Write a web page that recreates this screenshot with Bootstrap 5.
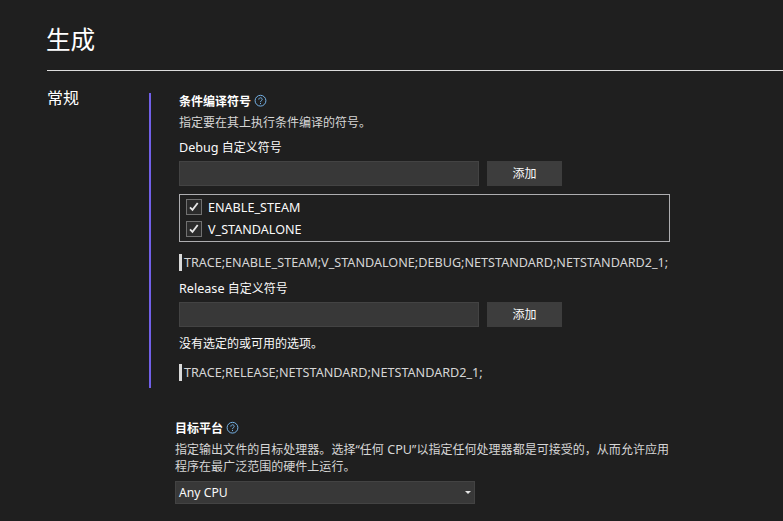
<!DOCTYPE html>
<html lang="zh-CN" data-bs-theme="dark">
<head>
<meta charset="utf-8">
<meta name="viewport" content="width=device-width, initial-scale=1">
<title>生成</title>
<link href="https://cdn.jsdelivr.net/npm/bootstrap@5.3.0/dist/css/bootstrap.min.css" rel="stylesheet">
<style>
body{background:#1f1f1f;color:#fafafa;font:12px/16px "Noto Sans","Noto Sans CJK SC",sans-serif;height:521px;overflow:hidden}
.page{padding:20px 0 0 47px}
.page-title{font-size:24.6px;line-height:40px;font-weight:400;height:51px;border-bottom:1px solid #dcdcdc;text-indent:-1px}
.section-name{font-size:16px;line-height:24px;width:102px;padding-top:15px;font-weight:400}
.options{width:521px;margin-top:22px}
.symbols{height:295px;border-left:2px solid #7160e8;padding-left:28px}
.platform{padding-left:26px;margin-top:33px}
.line{height:16px;line-height:16px;white-space:nowrap}
.heading{font-weight:700;font-size:12px}
.latin{font-size:12.6px}
.dim{color:#d6d6d6}
.symbols-title{line-height:16px;padding-top:1px}
.symbols-note{margin-top:6px}
.debug-label{margin-top:9px}
.entry{margin-top:5px}
.field{width:300px;height:25px;background:#383838;border:1px solid #434343;border-radius:0;padding:0 4px}
.field:focus{background:#383838;box-shadow:none}
.add{width:75px;height:25px;background:#3d3d3d;border:0;border-radius:0;color:#fafafa;font-size:12px;line-height:24px;padding:1px 0 0}
.add:hover{background:#4a4a4a}
.symbol-list{width:491px;height:48px;border:1px solid #adadb0;padding:4px 6px;gap:6px}
.symbol-list label{height:16px;line-height:18px;gap:6px}
.tick{width:16px;height:16px;border:1px solid #717171;background:#2b2b2b}
.tick svg,.help{display:block}
.help{margin-left:3px}
.summary{height:17px;line-height:17px;border-left:3px solid #dadada;padding-left:2px;color:#d6d6d6;white-space:nowrap;font-size:12.63px}
.debug-summary{margin-top:12px}
.release-label{margin-top:10px}
.release-entry{margin-top:5px}
.no-options{margin-top:9px}
.release-summary{margin-top:12px}
.platform-note{line-height:17px;margin-top:4px;letter-spacing:.03px;white-space:nowrap}
.platform-select{width:300px;height:23px;background:#383838;border:1px solid #434343;padding:0 3px;margin-top:6px;font-size:12.2px}
.arrow{border:3px solid transparent;border-top-color:#e4e4e4;border-bottom:0}
</style>
</head>
<body>
<main class="page">
<h1 class="page-title mb-0">生成</h1>
<div class="d-flex">
<h2 class="section-name mb-0">常规</h2>
<div class="options">
<section class="symbols">
<div class="line d-flex"><h3 class="heading symbols-title mb-0">条件编译符号</h3>
<svg class="help" width="13" height="16" viewBox="0 0 13 16" fill="none" stroke="#75b2e6"><circle cx="6.5" cy="7.7" r="5.4"/><path d="M4.8 6.6C4.8 4.2 8.2 4.2 8.2 6.5 8.2 7.6 6.5 7.7 6.5 9M6.5 9.9v1.2"/></svg></div>
<div class="line dim symbols-note">指定要在其上执行条件编译的符号。</div>
<label class="line d-block debug-label" for="debug"><span class="latin">Debug </span>自定义符号</label>
<div class="d-flex gap-2 entry"><input id="debug" class="form-control field"><button type="button" class="btn add">添加</button></div>
<div class="symbol-list mt-2 d-flex flex-column">
<label class="d-flex"><span class="tick"><svg width="14" height="14" viewBox="0 0 14 14"><path d="M3 7.3l2.5 2.6L10.7 3" fill="none" stroke="#e6e6e6" stroke-width="1.8"/></svg></span><span class="latin">ENABLE_STEAM</span></label>
<label class="d-flex"><span class="tick"><svg width="14" height="14" viewBox="0 0 14 14"><path d="M3 7.3l2.5 2.6L10.7 3" fill="none" stroke="#e6e6e6" stroke-width="1.8"/></svg></span><span class="latin">V_STANDALONE</span></label>
</div>
<div class="summary debug-summary">TRACE;ENABLE_STEAM;V_STANDALONE;DEBUG;NETSTANDARD;NETSTANDARD2_1;</div>
<label class="line d-block release-label" for="release"><span class="latin">Release </span>自定义符号</label>
<div class="d-flex gap-2 release-entry"><input id="release" class="form-control field"><button type="button" class="btn add">添加</button></div>
<div class="line no-options">没有选定的或可用的选项。</div>
<div class="summary release-summary">TRACE;RELEASE;NETSTANDARD;NETSTANDARD2_1;</div>
</section>
<section class="platform">
<div class="line d-flex"><h3 class="heading line mb-0">目标平台</h3>
<svg class="help" width="13" height="16" viewBox="0 0 13 16" fill="none" stroke="#75b2e6"><circle cx="6.5" cy="6.7" r="5.4"/><path d="M4.8 5.6C4.8 3.2 8.2 3.2 8.2 5.5 8.2 6.6 6.5 6.7 6.5 8M6.5 8.9v1.2"/></svg></div>
<p class="mb-0 dim platform-note">指定输出文件的目标处理器。选择“任何<span class="latin"> CPU</span>”以指定任何处理器都是可接受的，从而允许应用<br>程序在最广泛范围的硬件上运行。</p>
<div class="platform-select d-flex align-items-center justify-content-between" role="combobox" tabindex="0"><span>Any CPU</span><span class="arrow"></span></div>
</section>
</div></div>
</main>
<script src="https://cdn.jsdelivr.net/npm/bootstrap@5.3.0/dist/js/bootstrap.bundle.min.js"></script>
</body>
</html>
